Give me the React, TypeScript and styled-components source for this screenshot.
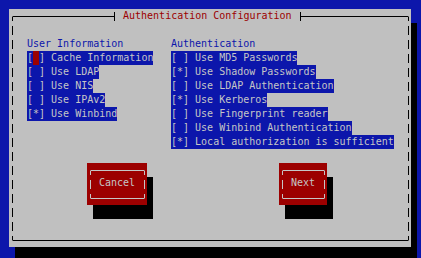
import styled, { createGlobalStyle } from 'styled-components'

const Palette = {
  blue: '#0c16ab',
  gray: '#c0c0c0',
  red: '#9c0000',
  black: '#000000',
  light: '#c6c6c6',
}

const CELL_W = 6
const ROW_H = 14

const GlobalStyle = createGlobalStyle`
  html, body {
    margin: 0;
    padding: 0;
    background: ${Palette.blue};
    overflow: hidden;
  }
  body {
    font-family: 'DejaVu Sans Mono', 'Liberation Mono', monospace;
    font-size: 10px;
    line-height: ${ROW_H}px;
  }
`

// a box whose left and right sides are drawn as the terminal's dashed line glyphs
const dashedSides = (color: string) => `
  border-left: 1px solid transparent;
  border-right: 1px solid transparent;
  border-top: 1px solid ${color};
  border-bottom: 1px solid ${color};
  background-image: linear-gradient(${color} 9px, transparent 9px),
    linear-gradient(${color} 9px, transparent 9px);
  background-size: 1px ${ROW_H}px;
  background-repeat: repeat-y;
  background-position: left 0 top 10px, right 0 top 10px;
  background-origin: border-box;
`

const Screen = styled.div`
  width: 421px;
  height: 258px;
  box-sizing: border-box;
  padding: 9px 0 0 9px;
`

const Window = styled.div`
  width: 402px;
  height: 238px;
  background: ${Palette.gray};
  box-shadow: ${CELL_W}px ${ROW_H}px 0 ${Palette.black};
  overflow: hidden;
`

const Frame = styled.div`
  box-sizing: border-box;
  width: 397px;
  height: 225px;
  margin: 7px 0 0 3px;
  ${dashedSides(Palette.black)}
  display: flex;
  flex-direction: column;
  align-items: flex-start;
`

const TitleBox = styled.div`
  display: flex;
  align-items: flex-start;
  box-sizing: border-box;
  width: 187px;
  height: 9px;
  margin: -5px 0 0 101px;
  padding-left: 8px;
  background: ${Palette.gray};
  border-left: 1px solid ${Palette.black};
  border-right: 1px solid ${Palette.black};
  color: ${Palette.red};
`

const TitleText = styled.span`
  margin-top: -3px;
  white-space: pre;
`

const Columns = styled.div`
  display: grid;
  grid-template-columns: 144px auto;
  margin: 16px 0 0 14px;
`

const List = styled.div`
  display: flex;
  flex-direction: column;
  align-items: flex-start;
`

const Heading = styled.div`
  color: ${Palette.blue};
  white-space: pre;
`

const Item = styled.div`
  display: flex;
  background: ${Palette.blue};
  color: ${Palette.light};
  white-space: pre;
`

const Mark = styled.span<{ $focused?: boolean }>`
  display: inline-block;
  width: ${CELL_W}px;
  height: ${ROW_H}px;
  text-align: center;
  background: ${({ $focused }) => ($focused ? Palette.red : 'transparent')};
`

const ButtonRow = styled.div`
  display: flex;
  gap: 132px;
  margin: 14px 0 0 74px;
`

const Button = styled.div<{ $cols: number }>`
  box-sizing: border-box;
  width: ${({ $cols }) => $cols * CELL_W}px;
  height: ${ROW_H * 3}px;
  padding: 7px 0 0 3px;
  background: ${Palette.red};
  box-shadow: ${CELL_W}px ${ROW_H}px 0 ${Palette.black};
`

const Bracket = styled.div<{ $cols: number }>`
  box-sizing: border-box;
  width: ${({ $cols }) => $cols * CELL_W - 5}px;
  height: 29px;
  padding: 5px 0 0 8px;
  ${dashedSides(Palette.light)}
  color: ${Palette.light};
  white-space: pre;
`

type Option = { label: string; checked?: boolean; focused?: boolean }

const userInfo: Option[] = [
  { label: 'Cache Information', focused: true },
  { label: 'Use LDAP' },
  { label: 'Use NIS' },
  { label: 'Use IPAv2' },
  { label: 'Use Winbind', checked: true },
]

const authentication: Option[] = [
  { label: 'Use MD5 Passwords' },
  { label: 'Use Shadow Passwords', checked: true },
  { label: 'Use LDAP Authentication' },
  { label: 'Use Kerberos', checked: true },
  { label: 'Use Fingerprint reader' },
  { label: 'Use Winbind Authentication' },
  { label: 'Local authorization is sufficient', checked: true },
]

const Checkbox = ({ label, checked, focused }: Option) => (
  <Item>
    [<Mark $focused={focused}>{checked ? '*' : ' '}</Mark>] {label}
  </Item>
)

const Section = ({ title, options }: { title: string; options: Option[] }) => (
  <List>
    <Heading>{title}</Heading>
    {options.map((o) => (
      <Checkbox key={o.label} {...o} />
    ))}
  </List>
)

const TuiButton = ({ text }: { text: string }) => {
  const cols = text.length + 4
  return (
    <Button $cols={cols}>
      <Bracket $cols={cols}>{text}</Bracket>
    </Button>
  )
}

export default function App() {
  return (
    <>
      <GlobalStyle />
      <Screen>
        <Window>
          <Frame>
            <TitleBox>
              <TitleText>Authentication Configuration</TitleText>
            </TitleBox>
            <Columns>
              <Section title="User Information" options={userInfo} />
              <Section title="Authentication" options={authentication} />
            </Columns>
            <ButtonRow>
              <TuiButton text="Cancel" />
              <TuiButton text="Next" />
            </ButtonRow>
          </Frame>
        </Window>
      </Screen>
    </>
  )
}
